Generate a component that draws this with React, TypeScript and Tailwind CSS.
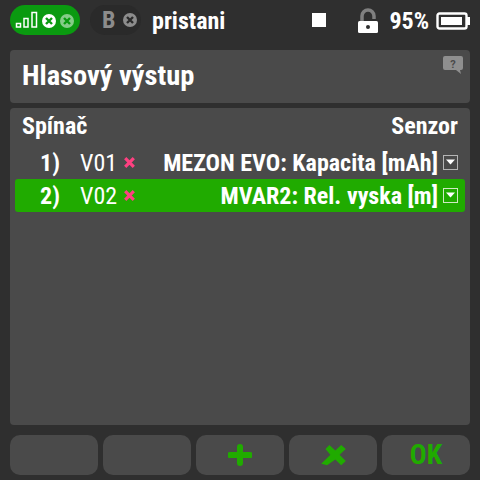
const XBadge = ({ className }: { className: string }) => (
  <svg width="16" height="16" viewBox="0 0 16 16" className={className}>
    <circle cx="8" cy="8" r="7" fill="currentColor" />
    <path d="M5 5l6 6M11 5l-6 6" stroke="var(--x)" strokeWidth="2.4" />
  </svg>
);

const Dropdown = ({ bright }: { bright?: boolean }) => (
  <svg width="15" height="15" viewBox="0 0 15 15" className="shrink-0 block">
    <rect x="0.5" y="0.5" width="14" height="14" fill="none" stroke={bright ? '#cfe9c4' : '#b5b5b5'} />
    <path d="M3 4.5h9l-4.5 5z" fill="#fff" />
  </svg>
);

const Cross = () => (
  <svg width="11" height="11" viewBox="0 0 11 11" className="shrink-0 block">
    <path d="M1.2 1.2l8.6 8.6M9.8 1.2l-8.6 8.6" stroke="#ff4081" strokeWidth="3.2" />
  </svg>
);

const rows = [
  { num: '1)', sw: 'V01', sensor: 'MEZON EVO: Kapacita [mAh]', active: false },
  { num: '2)', sw: 'V02', sensor: 'MVAR2: Rel. vyska [m]', active: true },
];

const StatusBar = () => (
  <div className="h-[50px] flex items-center">
    <div className="ml-[10px] mt-[-10px] w-[70px] h-[30px] rounded-full bg-[#0a9a10] flex items-center pl-[5px]">
      <svg width="24" height="18" viewBox="0 0 24 18" className="shrink-0">
        <rect x="1.5" y="12.5" width="4" height="3.5" fill="none" stroke="#fff" strokeWidth="1.5" />
        <rect x="9" y="7.5" width="4" height="8.5" fill="none" stroke="#fff" strokeWidth="1.5" />
        <rect x="17" y="1.5" width="4.5" height="14.5" fill="none" stroke="#fff" strokeWidth="1.5" />
      </svg>
      <XBadge className="text-white ml-[2px] mt-[2px] [--x:#0a9a10]" />
      <XBadge className="text-[#85cc88] ml-[2px] mt-[2px] [--x:#0a9a10]" />
    </div>
    <div className="ml-[10px] mt-[-10px] w-[51px] h-[30px] rounded-full bg-[#2a2a2a] flex items-center pl-[12px] gap-[7px]">
      <span className="text-[24px] font-bold leading-none text-[#8c8c8c] [font-stretch:85%]">B</span>
      <XBadge className="text-[#8c8c8c] [--x:#2a2a2a]" />
    </div>
    <span className="ml-[11px] mt-[-9px] text-[24px] font-bold leading-none text-white [font-stretch:85%]">pristani</span>
    <div className="ml-auto mt-[-10px] w-[14px] h-[14px] bg-white" />
    <svg width="22" height="26" viewBox="0 0 22 26" className="ml-[31px] mt-[-9px]">
      <path d="M5 13V8a6 6 0 0 1 12 0v3" fill="none" stroke="#808080" strokeWidth="3.5" />
      <rect x="1" y="13" width="20" height="12" rx="1.5" fill="#fff" />
      <circle cx="11" cy="19" r="2" fill="#2e2e2e" />
    </svg>
    <span className="ml-[10px] mt-[-9px] text-[24px] font-bold leading-none text-white [font-stretch:85%]">95%</span>
    <svg width="35" height="18" viewBox="0 0 35 18" className="ml-[7px] mr-[9px] mt-[-9px]">
      <rect x="1.5" y="1.5" width="29" height="15" rx="2" fill="none" stroke="#fff" strokeWidth="2.4" />
      <rect x="5" y="5" width="21" height="8" fill="#fff" />
      <rect x="31" y="5" width="3" height="8" fill="#fff" />
    </svg>
  </div>
);

export default function App() {
  return (
    <div className="w-[480px] h-[480px] overflow-hidden bg-[#2f2f2f] font-['Roboto',sans-serif] flex flex-col">
      <StatusBar />

      <div className="mx-[10px] h-[53px] rounded-[4px] bg-[#4a4a4a] relative flex items-center pl-[12px]">
        <h1 className="text-[28.5px] font-bold leading-none text-white [font-stretch:85%]">Hlasový výstup</h1>
        <svg width="20" height="18" viewBox="0 0 20 18" className="absolute top-[6px] right-[7px]">
          <path d="M2 0h16a2 2 0 0 1 2 2v10a2 2 0 0 1-2 2h-1l1 4-5-4H2a2 2 0 0 1-2-2V2a2 2 0 0 1 2-2z" fill="#8f8f8f" />
          <text x="10" y="11.5" fontSize="11" fontWeight="700" textAnchor="middle" fill="#4a4a4a">?</text>
        </svg>
      </div>

      <div className="mx-[10px] mt-[5px] h-[317px] rounded-[4px] bg-[#4a4a4a] px-[5px]">
        <div className="h-[38px] pb-[2px] flex items-center justify-between px-[7px] text-[24px] font-bold leading-none text-white [font-stretch:85%]">
          <span>Spínač</span>
          <span>Senzor</span>
        </div>
        {rows.map((row) => (
          <div
            key={row.num}
            className={`h-[33px] flex items-center pr-[7px] rounded-[3px] text-white ${row.active ? 'bg-[#20ab00]' : ''}`}
          >
            <span className="w-[45px] text-right text-[24px] font-bold leading-none [font-stretch:85%]">{row.num}</span>
            <span className="ml-[20px] text-[24px] leading-none [font-stretch:85%]">{row.sw}</span>
            <span className="ml-[7px]"><Cross /></span>
            <span className="ml-auto text-[24px] font-bold leading-none whitespace-nowrap [font-stretch:85%]">{row.sensor}</span>
            <span className="ml-[5px]"><Dropdown bright={row.active} /></span>
          </div>
        ))}
      </div>

      <div className="mx-[10px] mt-[10px] h-[40px] grid grid-cols-5 gap-[5px]">
        <div className="rounded-[10px] bg-[#4a4a4a]" />
        <div className="rounded-[10px] bg-[#4a4a4a]" />
        <div className="rounded-[10px] bg-[#4a4a4a] flex items-center justify-center">
          <svg width="24" height="22" viewBox="0 0 24 22">
            <path d="M12 3v16M2 11h20" stroke="#20ab00" strokeWidth="6" strokeLinecap="round" />
          </svg>
        </div>
        <div className="rounded-[10px] bg-[#4a4a4a] flex items-center justify-center">
          <svg width="25" height="21" viewBox="237 78 75 64">
            <path d="M250 90L262 78L280 95L298 78L312 90L293 108L312 127L298 140L280 122L255 140L237 135L265 108z" fill="#20ab00" />
          </svg>
        </div>
        <div className="rounded-[10px] bg-[#4a4a4a] flex items-center justify-center text-[28px] font-bold leading-none text-[#20ab00] [font-stretch:85%]">
          OK
        </div>
      </div>
    </div>
  );
}
